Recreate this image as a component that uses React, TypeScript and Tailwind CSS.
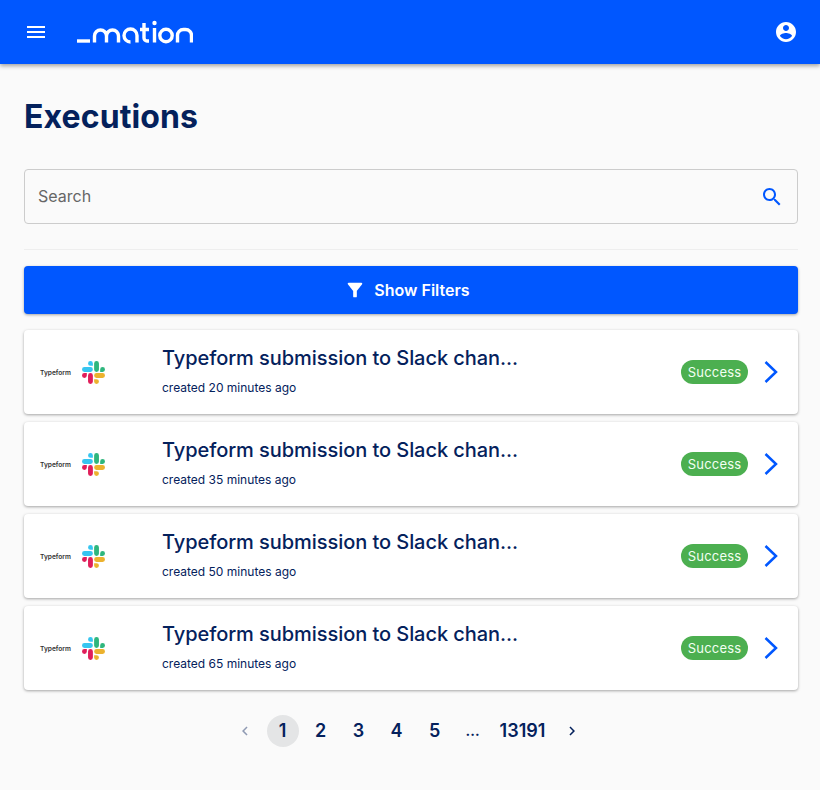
const BLUE = "#0057ff";

function Slack() {
  return (
    <svg width="23" height="23" viewBox="0 0 24 24" className="shrink-0">
      <path fill="#E01E5A" d="M5.042 15.165a2.528 2.528 0 0 1-2.52 2.523A2.528 2.528 0 0 1 0 15.165a2.527 2.527 0 0 1 2.522-2.52h2.52v2.52zM6.313 15.165a2.527 2.527 0 0 1 2.521-2.52 2.527 2.527 0 0 1 2.521 2.52v6.313A2.528 2.528 0 0 1 8.834 24a2.528 2.528 0 0 1-2.521-2.522v-6.313z" />
      <path fill="#36C5F0" d="M8.834 5.042a2.528 2.528 0 0 1-2.521-2.52A2.528 2.528 0 0 1 8.834 0a2.528 2.528 0 0 1 2.521 2.522v2.52H8.834zM8.834 6.313a2.528 2.528 0 0 1 2.521 2.521 2.528 2.528 0 0 1-2.521 2.521H2.522A2.528 2.528 0 0 1 0 8.834a2.528 2.528 0 0 1 2.522-2.521h6.312z" />
      <path fill="#2EB67D" d="M18.956 8.834a2.528 2.528 0 0 1 2.522-2.521A2.528 2.528 0 0 1 24 8.834a2.528 2.528 0 0 1-2.522 2.521h-2.522V8.834zM17.688 8.834a2.528 2.528 0 0 1-2.523 2.521 2.527 2.527 0 0 1-2.52-2.521V2.522A2.527 2.527 0 0 1 15.165 0a2.528 2.528 0 0 1 2.523 2.522v6.312z" />
      <path fill="#ECB22E" d="M15.165 18.956a2.528 2.528 0 0 1 2.523 2.522A2.528 2.528 0 0 1 15.165 24a2.527 2.527 0 0 1-2.52-2.522v-2.522h2.52zM15.165 17.688a2.527 2.527 0 0 1-2.52-2.523 2.526 2.526 0 0 1 2.52-2.52h6.313A2.527 2.527 0 0 1 24 15.165a2.528 2.528 0 0 1-2.522 2.523h-6.313z" />
    </svg>
  );
}

function Logo() {
  return (
    <svg width="116" height="24" viewBox="0 0 116 24" fill="none" stroke="#fff" strokeWidth="3.4" className="shrink-0">
      <path d="M0 21h13" />
      <path d="M17.5 22.5V16a6 6 0 0 1 12 0v6.5M29.5 16a6 6 0 0 1 12 0v6.5" />
      <path d="M53.5 22A6.5 6.5 0 1 1 60 15.5v7" />
      <path d="M67 3v15a3 3 0 0 0 3 3h2M63 9.5h9" />
      <path d="M77.5 8v14.5" />
      <circle cx="77.5" cy="3" r="2.2" fill="#fff" stroke="none" />
      <circle cx="89" cy="15.5" r="6.2" />
      <path d="M100.5 22.5V16a6 6 0 0 1 6-6.5h2a6 6 0 0 1 6 6.5v6.5" />
    </svg>
  );
}

function Row({ minutes }: { minutes: number }) {
  return (
    <div className="flex h-[84px] items-center rounded bg-white pl-4 pr-4 shadow-[0_1px_3px_rgba(0,0,0,0.35)]">
      <div className="flex w-[122px] shrink-0 items-center">
        <span className="mt-[3px] w-[42px] text-[6.6px] font-semibold text-[#333]">Typeform</span>
        <Slack />
      </div>
      <div className="flex min-w-0 flex-1 flex-col gap-1.5 pb-0.5">
        <div className="text-xl leading-7 font-medium tracking-[-0.06px] text-[#04215c]">Typeform submission to Slack chan...</div>
        <div className="text-xs leading-5 text-[#04215c]">created {minutes} minutes ago</div>
      </div>
      <span className="flex h-6 w-[67px] items-center justify-center rounded-full bg-[#4caf50] pt-px text-[13px] tracking-[0.2px] text-[#f2fff2]">Success</span>
      <svg width="24" height="24" viewBox="0 0 24 24" fill="none" stroke={BLUE} strokeWidth="2.5" className="ml-[10px] shrink-0">
        <path d="M7.5 2 18 12 7.5 22" />
      </svg>
    </div>
  );
}

function Page({ label, active }: { label: string; active?: boolean }) {
  return (
    <span className={`flex h-8 min-w-8 items-center justify-center rounded-full px-[5px] text-lg font-semibold text-[#04215c] ${active ? "bg-[#e4e5e6]" : ""}`}>
      {label}
    </span>
  );
}

export default function App() {
  return (
    <div className="min-h-[790px] bg-[#fafafa] font-['Inter',sans-serif] text-[#04215c]">
      <header className="flex h-16 items-center bg-[#0057ff] pl-6 pr-[22px] text-white shadow-[0_2px_4px_rgba(0,0,0,0.35)]">
        <svg width="24" height="24" viewBox="0 0 24 24" fill="#fff" className="shrink-0">
          <path d="M3 18h18v-2H3v2zm0-5h18v-2H3v2zm0-7v2h18V6H3z" />
        </svg>
        <div className="ml-[29px]">
          <Logo />
        </div>
        <svg width="24" height="24" viewBox="0 0 24 24" fill="#fff" className="ml-auto shrink-0">
          <path d="M12 2C6.48 2 2 6.48 2 12s4.48 10 10 10 10-4.48 10-10S17.52 2 12 2zm0 3c1.66 0 3 1.34 3 3s-1.34 3-3 3-3-1.34-3-3 1.34-3 3-3zm0 14.2c-2.5 0-4.71-1.28-6-3.22.03-1.99 4-3.08 6-3.08 1.99 0 5.97 1.09 6 3.08-1.29 1.94-3.5 3.22-6 3.22z" />
        </svg>
      </header>

      <main className="pl-6 pr-[22px]">
        <h1 className="mt-[33px] text-[32px] leading-10 font-bold tracking-[0.1px] text-[#04215c]">Executions</h1>

        <div className="mt-8 flex h-[55px] items-center rounded border-[1.5px] border-[#cccccc] pl-[13px] pr-[13px]">
          <span className="-mt-0.5 text-base text-[#666]">Search</span>
          <svg width="24" height="24" viewBox="0 0 24 24" fill={BLUE} className="ml-auto shrink-0">
            <path d="M15.5 14h-.79l-.28-.27C15.41 12.59 16 11.11 16 9.5 16 5.91 13.09 3 9.5 3S3 5.91 3 9.5 5.91 16 9.5 16c1.61 0 3.09-.59 4.23-1.57l.27.28v.79l5 4.99L20.49 19l-4.99-5zm-6 0C7.01 14 5 11.99 5 9.5S7.01 5 9.5 5 14 7.01 14 9.5 11.99 14 9.5 14z" />
          </svg>
        </div>

        <div className="mt-[25px] h-px bg-[#eeeeee]" />

        <button className="mt-4 flex h-12 w-full items-center justify-center gap-2 rounded bg-[#0057ff] pr-2 text-base font-semibold text-white shadow-[0_1px_3px_rgba(0,0,0,0.35)]">
          <svg width="22" height="22" viewBox="0 0 24 24" fill="#fff" className="shrink-0">
            <path d="M4.25 5.61C6.27 8.2 10 13 10 13v6c0 .55.45 1 1 1h2c.55 0 1-.45 1-1v-6s3.72-4.8 5.74-7.39c.51-.66.04-1.61-.79-1.61H5.04c-.83 0-1.3.95-.79 1.61z" />
          </svg>
          Show Filters
        </button>

        <div className="mt-4 flex flex-col gap-2">
          {[20, 35, 50, 65].map((m) => (
            <Row key={m} minutes={m} />
          ))}
        </div>

        <nav className="mt-[25px] flex items-center justify-center gap-1.5 pr-[5px]">
          <span className="flex h-8 w-8 items-center justify-center">
            <svg width="18" height="18" viewBox="0 0 24 24" fill="#8f9ab3">
              <path d="M15.41 7.41 14 6l-6 6 6 6 1.41-1.41L10.83 12z" />
            </svg>
          </span>
          <Page label="1" active />
          <Page label="2" />
          <Page label="3" />
          <Page label="4" />
          <Page label="5" />
          <span className="flex h-8 w-8 items-center justify-center text-sm font-bold text-[#04215c]">...</span>
          <Page label="13191" />
          <span className="flex h-8 w-8 items-center justify-center">
            <svg width="18" height="18" viewBox="0 0 24 24" fill="#04215c">
              <path d="M10 6 8.59 7.41 13.17 12l-4.58 4.59L10 18l6-6z" />
            </svg>
          </span>
        </nav>
      </main>
    </div>
  );
}
